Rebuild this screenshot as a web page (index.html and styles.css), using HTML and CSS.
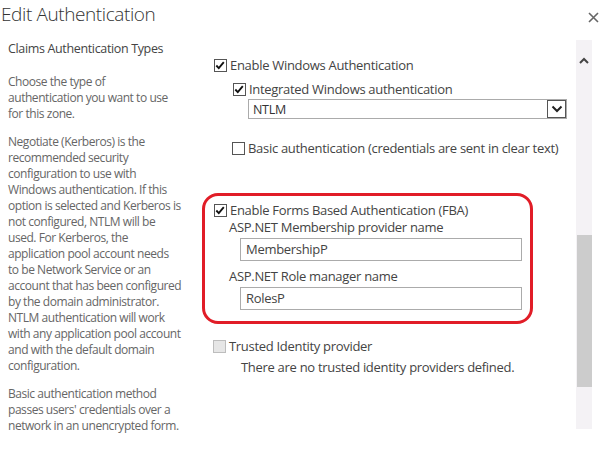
FILE: index.html
```html
<!DOCTYPE html>
<html>
<head>
<meta charset="utf-8">
<link rel="stylesheet" href="styles.css">
</head>
<body>
<div class="dialog">
  <div class="header">
    <div class="title">Edit Authentication</div>
    <div class="close">
      <svg width="11" height="11" viewBox="0 0 11 11"><path d="M1 1 L10 10 M10 1 L1 10" stroke="#666" stroke-width="1.6" fill="none"/></svg>
    </div>
  </div>
  <div class="body">
    <div class="content">
      <div class="left">
        <div class="section-title">Claims Authentication Types</div>
        <p class="desc">Choose the type of<br>authentication you want to use<br>for this zone.</p>
        <p class="desc">Negotiate (Kerberos) is the<br>recommended security<br>configuration to use with<br>Windows authentication. If this<br>option is selected and Kerberos is<br>not configured, NTLM will be<br>used. For Kerberos, the<br>application pool account needs<br>to be Network Service or an<br>account that has been configured<br>by the domain administrator.<br>NTLM authentication will work<br>with any application pool account<br>and with the default domain<br>configuration.</p>
        <p class="desc">Basic authentication method<br>passes users' credentials over a<br>network in an unencrypted form.</p>
      </div>
      <div class="right">
        <div class="row win">
          <span class="cb checked"><svg width="13" height="13" viewBox="0 0 13 13"><path d="M2.5 6.5 L5.2 9.4 L10.6 2.8" stroke="#111" stroke-width="2" fill="none"/></svg></span>
          <span>Enable Windows Authentication</span>
        </div>
        <div class="row integrated">
          <span class="cb checked"><svg width="13" height="13" viewBox="0 0 13 13"><path d="M2.5 6.5 L5.2 9.4 L10.6 2.8" stroke="#111" stroke-width="2" fill="none"/></svg></span>
          <span>Integrated Windows authentication</span>
        </div>
        <div class="select">
          <span class="select-text">NTLM</span>
          <span class="select-btn"><svg width="12" height="8" viewBox="0 0 12 8"><path d="M1.5 1.5 L6 6 L10.5 1.5" stroke="#222" stroke-width="2" fill="none"/></svg></span>
        </div>
        <div class="row basic">
          <span class="cb"></span>
          <span>Basic authentication (credentials are sent in clear text)</span>
        </div>
        <div class="fba">
          <div class="row">
            <span class="cb checked"><svg width="13" height="13" viewBox="0 0 13 13"><path d="M2.5 6.5 L5.2 9.4 L10.6 2.8" stroke="#111" stroke-width="2" fill="none"/></svg></span>
            <span>Enable Forms Based Authentication (FBA)</span>
          </div>
          <div class="field-label">ASP.NET Membership provider name</div>
          <div class="input">MembershipP</div>
          <div class="field-label second">ASP.NET Role manager name</div>
          <div class="input">RolesP</div>
        </div>
        <div class="row trusted">
          <span class="cb disabled"></span>
          <span>Trusted Identity provider</span>
        </div>
        <div class="note">There are no trusted identity providers defined.</div>
      </div>
    </div>
    <div class="scrollbar">
      <div class="arrow"><svg width="10" height="7" viewBox="0 0 10 7"><path d="M1 6 L5 2 L9 6" stroke="#444" stroke-width="2" fill="none"/></svg></div>
      <div class="track-top"></div>
      <div class="thumb"></div>
    </div>
  </div>
</div>
</body>
</html>
```

FILE: styles.css
```css
* { box-sizing: border-box; }
html, body { margin: 0; padding: 0; background: #fff; }
body {
  font-family: "Open Sans", "Noto Sans", sans-serif;
  color: #444;
  width: 612px;
  height: 449px;
  overflow: hidden;
}
.dialog { display: flex; flex-direction: column; height: 449px; }
.header {
  height: 40px;
  display: flex;
  justify-content: space-between;
  align-items: flex-start;
}
.title {
  font-size: 19px;
  font-weight: 300;
  color: #333;
  line-height: 28px;
  padding-left: 1px;
  letter-spacing: -0.4px;
}
.close { margin-top: 6px; margin-right: 13px; }
.body { display: flex; flex: 1; }
.content { flex: 1; display: flex; }
.left { width: 202px; padding-left: 8px; }
.section-title {
  font-size: 12.5px;
  line-height: 18px;
  color: #444;
  letter-spacing: -0.35px;
}
.desc {
  font-size: 12px;
  line-height: 16px;
  color: #666;
  margin: 16px 0 0 0;
  letter-spacing: -0.45px;
  white-space: nowrap;
}
.desc + .desc { margin-top: 12px; }
.right { flex: 1; font-size: 13px; letter-spacing: -0.3px; color: #444; }
.row { display: flex; align-items: center; height: 16px; line-height: 16px; white-space: nowrap; }
.cb {
  width: 13px; height: 13px;
  border: 1px solid #555;
  background: #fff;
  margin-right: 3px;
  display: inline-flex;
  flex: none;
}
.cb svg { margin: -1px 0 0 -1px; }
.cb.disabled { background: #e6e6e6; border-color: #bdbdbd; }
.win { margin-top: 17px; padding-left: 12px; }
.integrated { margin-top: 8px; padding-left: 31px; }
.select {
  margin: 2px 0 0 46px;
  width: 319px;
  height: 20px;
  border: 1px solid #ababab;
  display: flex;
  align-items: center;
  justify-content: space-between;
}
.select-text { padding-left: 4px; font-size: 12.5px; color: #333; }
.select-btn {
  width: 19px; height: 18px;
  border: 1px solid #555;
  display: flex; align-items: center; justify-content: center;
}
.basic { margin-top: 21px; padding-left: 30px; }
.fba {
  margin-top: 37px;
  width: 331px;
  border: 3px solid #e11d27;
  border-radius: 16px;
  padding: 6px 0 11px 9px;
}
.field-label { padding-left: 15px; line-height: 16px; margin-top: 1px; }
.field-label.second { margin-top: 7px; }
.input {
  margin: 3px 0 0 26px;
  width: 282px;
  height: 23px;
  border: 1px solid #ababab;
  line-height: 21px;
  padding-left: 5px;
  color: #444;
}
.trusted { margin-top: 14px; padding-left: 11px; }
.note { margin-top: 5px; padding-left: 39px; line-height: 16px; }
.scrollbar {
  width: 16px;
  margin-right: 20px;
  height: 389px;
  background: #f4f2f5;
  display: flex;
  flex-direction: column;
}
.arrow { height: 28px; display: flex; justify-content: center; align-items: flex-end; padding-bottom: 4px; }
.track-top { height: 167px; }
.thumb { height: 152px; background: #cccccc; margin-left: 1px; }
```
